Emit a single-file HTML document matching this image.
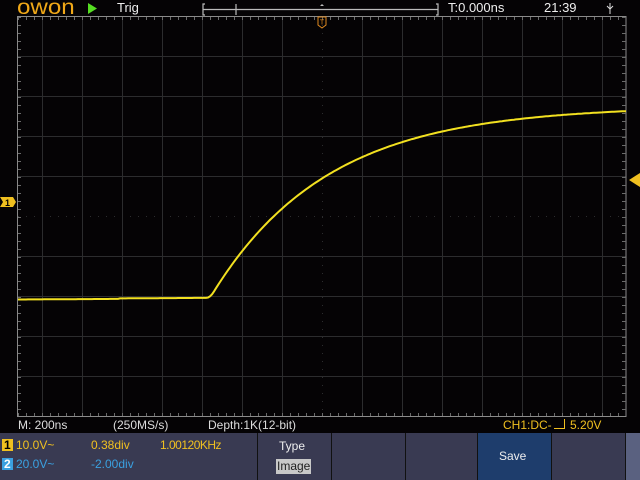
<!DOCTYPE html>
<html><head><style>
body{margin:0;width:640px;height:480px;background:#050305;overflow:hidden;position:relative;font-family:"Liberation Sans",sans-serif}
.t{position:absolute;white-space:nowrap}
</style></head><body>
<svg width="640" height="480" style="position:absolute;left:0;top:0">
<g id="grid" stroke="#2c2c2e" stroke-width="1"></g>
<rect x="17.5" y="16.5" width="608.5" height="400" fill="none" stroke="#8a8a8a" stroke-width="1"/>
<g id="ticks" stroke="#6a6a6a"></g>
<polyline id="tr" fill="none" stroke="#f2e020" stroke-width="2"/>
<path d="M205 4h-2v11h2M203 9.5h235M436 4h2v11h-2M236 4v11" stroke="#bbb" fill="none" stroke-width="1.2"/>
<polygon points="88,3 88,14 97,8.5" fill="#55dd22"/>
<path d="M318 17h8v8l-4 3-4-3z" fill="none" stroke="#e08a20"/>
<text x="322" y="24.5" font-size="7" fill="#e08a20" text-anchor="middle" font-family="Liberation Sans">T</text>
<path d="M322 4l-2 2h4z" fill="#bbb"/>
<path d="M610 3v11M607 6l3 3 3-3" stroke="#ddd" fill="none"/>
<path d="M0 197h13l3 5-3 5H0l3-5z" fill="#f0c020"/>
<text x="5" y="206" font-size="9" font-weight="bold" fill="#000">1</text>
<path d="M640 173v14l-11-7z" fill="#f0c020"/>
<rect x="0" y="433" width="640" height="47" fill="#393a52"/>
<rect x="478" y="433" width="73" height="47" fill="#1e3d6c"/>
<rect x="626" y="433" width="14" height="47" fill="#5a6180"/>
<path d="M257.5 433v47M331.5 433v47M405.5 433v47M477.5 433v47M551.5 433v47M625.5 433v47" stroke="#111"/>
<rect x="2" y="439" width="11" height="12" fill="#f0c020"/>
<rect x="2" y="458" width="11" height="12" fill="#3aa0e0"/>
<rect x="276" y="459" width="35" height="15" fill="#c8c8c8"/>
</svg>
<div class="t" style="left:17px;top:-4px;font-size:21px;color:#f0a818;letter-spacing:0px;transform:scaleX(1.15);transform-origin:left">owon</div>
<div class="t" style="left:117px;top:0px;font-size:13px;color:#eee">Trig</div>
<div class="t" style="left:448px;top:0px;font-size:13px;color:#eee">T:0.000ns</div>
<div class="t" style="left:544px;top:0px;font-size:13px;color:#eee">21:39</div>
<div class="t" style="left:18px;top:418px;font-size:12px;color:#ddd">M: 200ns</div>
<div class="t" style="left:113px;top:418px;font-size:12px;color:#ddd">(250MS/s)</div>
<div class="t" style="left:208px;top:418px;font-size:12px;color:#ddd">Depth:1K(12-bit)</div>
<div class="t" style="left:503px;top:418px;font-size:12px;color:#f0c020">CH1:DC-<span style="display:inline-block;width:10px;height:9px;border-bottom:1px solid #f0c020;border-right:1px solid #f0c020;margin:0 2px"></span> 5.20V</div>
<div class="t" style="left:4px;top:438px;font-size:12px;font-weight:bold;color:#000">1</div>
<div class="t" style="left:4px;top:457px;font-size:12px;font-weight:bold;color:#fff">2</div>
<div class="t" style="left:16px;top:438px;font-size:12px;color:#f0c020">10.0V~</div>
<div class="t" style="left:16px;top:457px;font-size:12px;color:#3aa0e0">20.0V~</div>
<div class="t" style="left:91px;top:438px;font-size:12px;color:#f0c020">0.38div</div>
<div class="t" style="left:91px;top:457px;font-size:12px;color:#3aa0e0">-2.00div</div>
<div class="t" style="left:160px;top:438px;font-size:12px;color:#f0c020;letter-spacing:-0.5px">1.00120KHz</div>
<div class="t" style="left:279px;top:439px;font-size:12px;color:#eee">Type</div>
<div class="t" style="left:277px;top:459px;font-size:12px;color:#222">Image</div>
<div class="t" style="left:499px;top:449px;font-size:12px;color:#eee">Save</div>
<script>
var ns="http://www.w3.org/2000/svg",g=document.getElementById('grid'),tk=document.getElementById('ticks');
function ln(p,x1,y1,x2,y2,st){var l=document.createElementNS(ns,'line');l.setAttribute('x1',x1);l.setAttribute('y1',y1);l.setAttribute('x2',x2);l.setAttribute('y2',y2);if(st)l.setAttribute('stroke-dasharray',st);p.appendChild(l);}
for(var x=42.5;x<626;x+=40){if(x==322.5)ln(g,x,17,x,416,'1,7');else ln(g,x,17,x,416);}
for(var y=56.5;y<416;y+=40){if(y==216.5)ln(g,18,y,626,y,'1,7');else ln(g,18,y,626,y);}
for(var x=18;x<626;x+=8){ln(tk,x+.5,17,x+.5,20);ln(tk,x+.5,413,x+.5,416);}
for(var y=17;y<416;y+=8){ln(tk,18,y+.5,21,y+.5);ln(tk,622,y+.5,626,y+.5);}
var p=[];for(var x=18;x<=626;x+=2){var y;var u=x-206;if(u<=0)y=299+(x<120?0.5:0)-(x-18)*0.006;else{var s=u<8?u*u/16:u-4;y=298-192*(1-Math.exp(-s/115));}p.push(x+','+y.toFixed(1));}
document.getElementById('tr').setAttribute('points',p.join(' '));
</script>
</body></html>
